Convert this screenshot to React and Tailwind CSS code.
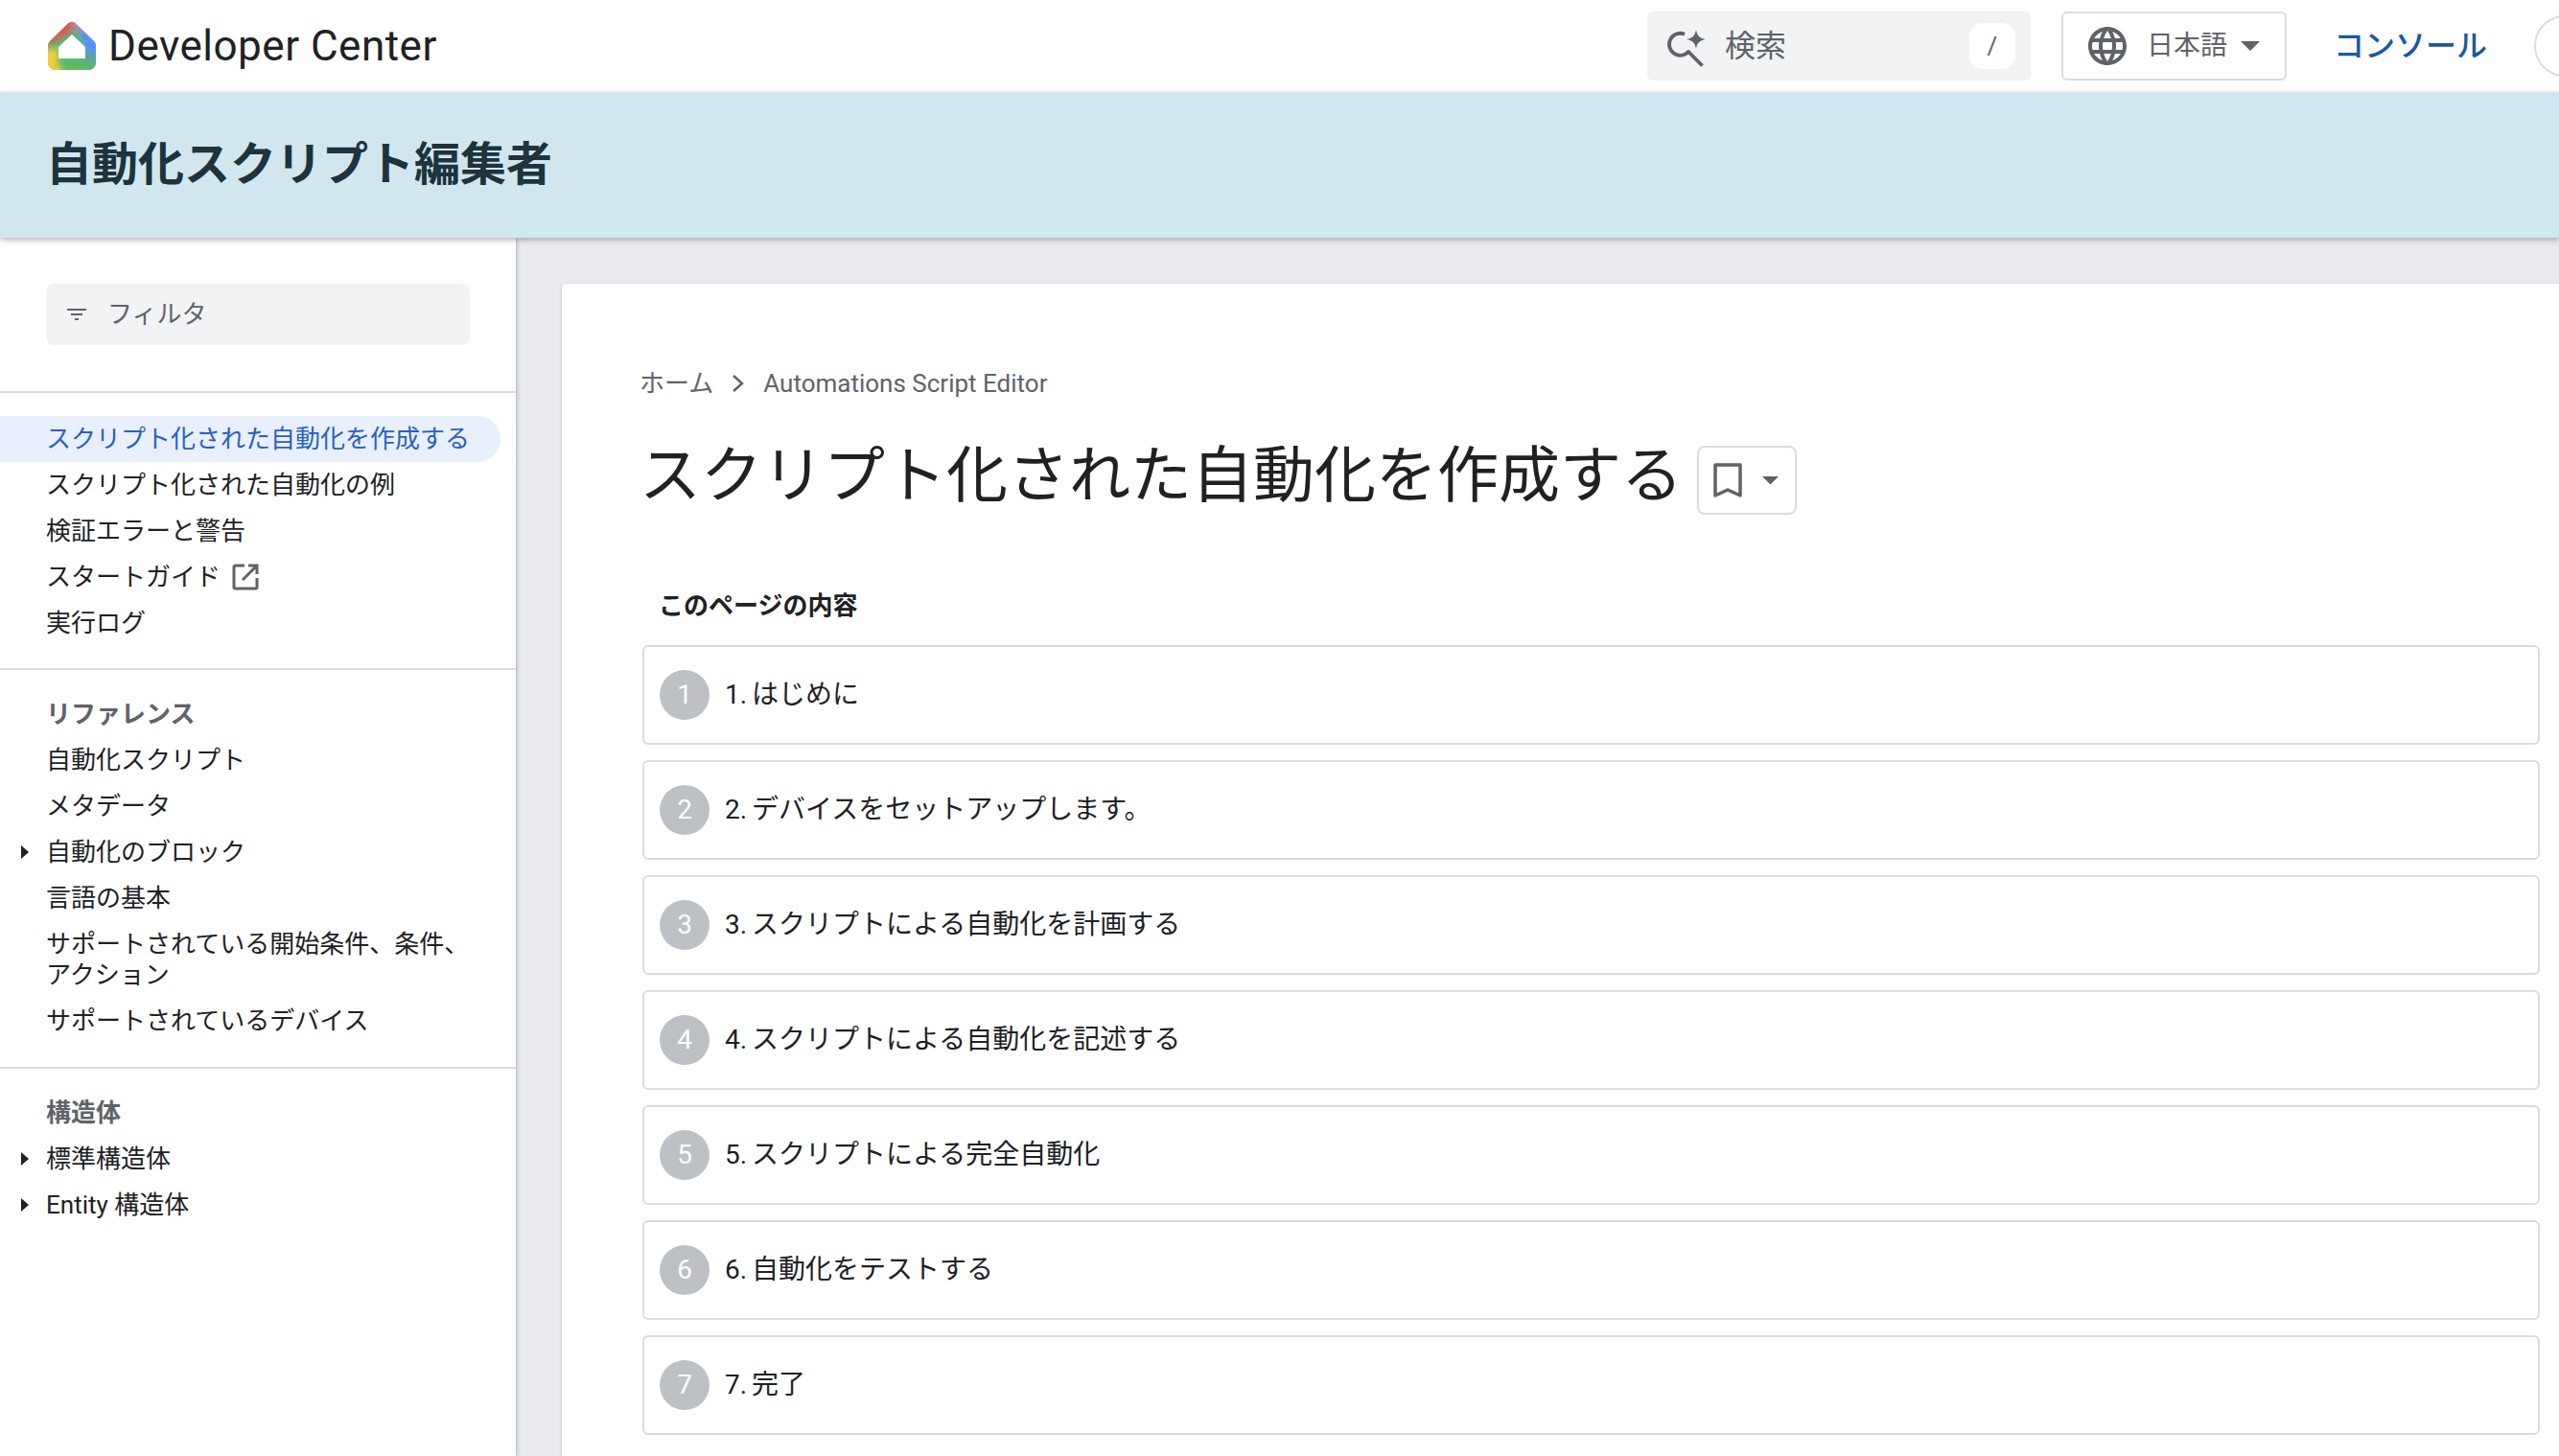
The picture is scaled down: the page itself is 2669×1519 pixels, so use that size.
import React from 'react';

const font = { fontFamily: 'Roboto, "Noto Sans CJK JP", sans-serif' };

const Logo = () => (
  <svg width="54" height="54" viewBox="0 0 54 54" className="shrink-0">
    <defs>
      <clipPath id="house">
        <path d="M27 2c2 0 3.400.8 4.800 2.300L50 22c1.300 1.500 2 3 2 5v17c0 4.500-3.500 8-8 8H10c-4.500 0-8-3.500-8-8V27c0-2 .7-3.500 2-5L22.200 4.300C23.600 2.800 25 2 27 2z" />
      </clipPath>
      <filter id="soft" x="-30%" y="-30%" width="160%" height="160%">
        <feGaussianBlur stdDeviation="3" />
      </filter>
    </defs>
    <g clipPath="url(#house)">
      <rect width="54" height="54" fill="#5bb974" />
      <g filter="url(#soft)">
        <polygon points="-5,-5 27,-5 27,12 -5,30" fill="#e2574c" />
        <polygon points="27,-5 42,-5 42,16 30,10" fill="#b97fc8" />
        <polygon points="36,10 60,0 60,36 40,34" fill="#5c8ffb" />
        <polygon points="-5,30 14,30 12,46 20,60 -5,60" fill="#f2cf3b" />
        <polygon points="40,34 60,34 60,46 42,44" fill="#57a5a0" />
        <polygon points="14,44 50,44 50,60 22,60" fill="#5fb760" />
      </g>
    </g>
    <path d="M27 15L13 28v12h28V28z" fill="#fff" />
  </svg>
);

const SearchSpark = () => (
  <svg width="44" height="44" viewBox="0 0 44 44" fill="none" className="shrink-0">
    <path d="M19 9.700a11.500 11.500 0 1 0 5 17" stroke="#5f6368" strokeWidth="3.800" />
    <path d="M22.500 27.500l15 15" stroke="#5f6368" strokeWidth="3.800" />
    <path d="M31 5c1 6 3.500 9 10 10-6.500 1-9 4-10 10-1-6-3.500-9-10-10 6.500-1 9-4 10-10z" fill="#5f6368" />
  </svg>
);

const Globe = () => (
  <svg width="48" height="48" viewBox="0 0 24 24" className="shrink-0" fill="#5f6368">
    <path d="M12 2C6.480 2 2 6.480 2 12s4.480 10 10 10 10-4.480 10-10S17.520 2 12 2zm6.930 6h-2.950a15.650 15.650 0 0 0-1.380-3.560A8.030 8.030 0 0 1 18.930 8zM12 4.040c.83 1.200 1.480 2.530 1.910 3.960h-3.820c.43-1.430 1.080-2.760 1.910-3.960zM4.260 14C4.100 13.360 4 12.690 4 12s.1-1.360.26-2h3.380c-.08.660-.14 1.320-.14 2s.06 1.340.14 2H4.260zm.82 2h2.950c.32 1.250.78 2.450 1.380 3.560A7.987 7.987 0 0 1 5.080 16zm2.950-8H5.080a7.987 7.987 0 0 1 4.330-3.560A15.650 15.650 0 0 0 8.030 8zM12 19.960c-.83-1.200-1.480-2.530-1.910-3.960h3.820c-.43 1.430-1.080 2.760-1.910 3.960zM14.340 14H9.660c-.09-.660-.16-1.320-.16-2s.07-1.350.16-2h4.680c.09.650.16 1.320.16 2s-.07 1.340-.16 2zm.25 5.560c.6-1.110 1.060-2.310 1.380-3.560h2.950a8.030 8.030 0 0 1-4.330 3.560zM16.360 14c.08-.660.14-1.320.14-2s-.06-1.340-.14-2h3.380c.16.640.26 1.310.26 2s-.1 1.360-.26 2h-3.380z" />
  </svg>
);

const Caret = ({ size = 20 }) => (
  <svg width={size} height={size / 2} viewBox="0 0 20 10" className="shrink-0">
    <path d="M0 0h20L10 10z" fill="#5f6368" />
  </svg>
);

const FilterIcon = () => (
  <svg width="24" height="24" viewBox="0 0 24 24" className="shrink-0" fill="#5f6368">
    <path d="M2 6h20v2H2zM6 11h12v2H6zM10 16h4v2h-4z" />
  </svg>
);

const ExternalIcon = () => (
  <svg width="30" height="30" viewBox="0 0 30 30" fill="none" className="shrink-0">
    <path d="M14 3H4.500A1.500 1.500 0 0 0 3 4.500v21A1.500 1.500 0 0 0 4.500 27h21a1.500 1.500 0 0 0 1.500-1.500V16" stroke="#5f6368" strokeWidth="3" />
    <path d="M18 3h9v9M27 3L12 18" stroke="#5f6368" strokeWidth="3" />
  </svg>
);

const Arrow = () => (
  <svg width="8" height="14" viewBox="0 0 8 14" className="absolute left-[22px] top-1/2 -translate-y-1/2">
    <path d="M0 0l8 7-8 7z" fill="#202124" />
  </svg>
);

const NavItem = ({ children, active, arrow, bold }) => (
  <div
    className={`relative flex min-h-[48px] items-center py-[8px] pl-[48px] text-[26px] leading-[32px] ${
      active ? 'mr-[16px] rounded-r-[24px] bg-[#e8f0fe] pr-[20px] text-[#2a5fc4]' : bold ? 'pr-[44px] font-bold text-[#5f6368]' : 'pr-[44px] text-[#202124]'
    }`}
  >
    {arrow && <Arrow />}
    {children}
  </div>
);

const Divider = () => <div className="h-[2px] bg-[#dadce0]" />;

const steps = [
  '1. はじめに',
  '2. デバイスをセットアップします。',
  '3. スクリプトによる自動化を計画する',
  '4. スクリプトによる自動化を記述する',
  '5. スクリプトによる完全自動化',
  '6. 自動化をテストする',
  '7. 完了',
];

const App = () => (
  <div className="flex h-[1519px] flex-col overflow-hidden bg-[#e8eaed]" style={font}>
    <header className="flex h-[96px] shrink-0 items-center bg-white pl-[48px]">
      <Logo />
      <span className="ml-[11px] text-[44px] leading-none tracking-[0.5px] text-[#202124]">Developer Center</span>
      <div className="ml-auto flex h-[72px] w-[400px] items-center rounded-[6px] bg-[#f1f3f4] pl-[20px] pr-[16px]">
        <SearchSpark />
        <span className="ml-[17px] text-[32px] text-[#5f6368]">検索</span>
        <span className="ml-auto flex h-[48px] w-[48px] items-center justify-center rounded-[14px] bg-white text-[26px] text-[#5f6368]">/</span>
      </div>
      <button className="ml-[32px] flex h-[72px] w-[235px] items-center rounded-[6px] border-2 border-[#dadce0] bg-white pl-[22px]">
        <Globe />
        <span className="ml-[17px] text-[28px] text-[#5f6368]">日本語</span>
        <span className="ml-[14px]"><Caret /></span>
      </button>
      <span className="ml-[49px] text-[32px] font-medium text-[#1a5a9e]">コンソール</span>
      <div className="ml-[49px] mr-[-38px] h-[64px] w-[64px] shrink-0 rounded-full border-2 border-[#dadce0]" />
    </header>

    <div className="relative z-10 flex h-[152px] shrink-0 items-center bg-[#d2e6ee] pl-[48px] shadow-[0_2px_6px_rgba(60,64,67,0.4)]">
      <h1 className="text-[48px] font-bold text-[#1d333d]">自動化スクリプト編集者</h1>
    </div>

    <div className="flex min-h-0 flex-1">
      <aside className="w-[538px] shrink-0 bg-white pt-[48px] shadow-[1px_0_4px_rgba(60,64,67,0.35)]">
        <div className="mx-[48px] flex h-[64px] w-[442px] items-center rounded-[8px] bg-[#f1f3f4] pl-[20px] text-[26px] text-[#5f6368]">
          <FilterIcon />
          <span className="ml-[20px]">フィルタ</span>
        </div>
        <div className="mt-[48px]"><Divider /></div>
        <nav className="pb-[23px] pt-[24px]">
          <NavItem active>スクリプト化された自動化を作成する</NavItem>
          <NavItem>スクリプト化された自動化の例</NavItem>
          <NavItem>検証エラーと警告</NavItem>
          <NavItem>
            <span>スタートガイド</span>
            <span className="ml-[11px]"><ExternalIcon /></span>
          </NavItem>
          <NavItem>実行ログ</NavItem>
        </nav>
        <Divider />
        <nav className="pb-[24px] pt-[22px]">
          <NavItem bold>リファレンス</NavItem>
          <NavItem>自動化スクリプト</NavItem>
          <NavItem>メタデータ</NavItem>
          <NavItem arrow>自動化のブロック</NavItem>
          <NavItem>言語の基本</NavItem>
          <NavItem>サポートされている開始条件、条件、アクション</NavItem>
          <NavItem>サポートされているデバイス</NavItem>
        </nav>
        <Divider />
        <nav className="pb-[24px] pt-[22px]">
          <NavItem bold>構造体</NavItem>
          <NavItem arrow>標準構造体</NavItem>
          <NavItem arrow>Entity 構造体</NavItem>
        </nav>
      </aside>

      <main className="min-w-0 flex-1 pl-[48px] pt-[48px]">
        <div className="h-[1400px] rounded-tl-[4px] bg-white pl-[81px] pr-[20px] pt-[84px] shadow-[0_1px_3px_rgba(60,64,67,0.3)]">
          <div className="flex h-[40px] items-center text-[26px] text-[#5f6368]">
            <span>ホーム</span>
            <svg width="14" height="20" viewBox="0 0 14 20" fill="none" className="mx-[19px]">
              <path d="M2 2l9 8-9 8" stroke="#5f6368" strokeWidth="2.500" />
            </svg>
            <span>Automations Script Editor</span>
          </div>
          <div className="mt-[33px] flex items-center">
            <h2 className="text-[64px] font-normal leading-[88px] text-[#202124]">スクリプト化された自動化を作成する</h2>
            <button className="ml-[15px] mt-[8px] flex h-[72px] w-[104px] items-center rounded-[8px] border-2 border-[#dadce0] bg-white pl-[15px]">
              <svg width="30" height="36" viewBox="0 0 30 36" fill="none">
                <path d="M2 34V2h26v32l-13-6z" stroke="#5f6368" strokeWidth="3.500" strokeLinejoin="round" />
              </svg>
              <span className="ml-[21px]"><Caret size={17} /></span>
            </button>
          </div>
          <div className="ml-[20px] mt-[71px] text-[26px] font-bold leading-[40px] text-[#202124]">このページの内容</div>
          <div className="ml-[3px] mt-[21px] flex flex-col gap-[16px]">
            {steps.map((step, i) => (
              <div key={step} className="flex h-[104px] items-center rounded-[6px] border-2 border-[#dadce0] bg-white pl-[16px]">
                <span className="flex h-[52px] w-[52px] shrink-0 items-center justify-center rounded-full bg-[#bdc1c6] text-[28px] text-white">{i + 1}</span>
                <span className="ml-[16px] text-[28px] text-[#202124] [word-spacing:-2px]">{step}</span>
              </div>
            ))}
          </div>
        </div>
      </main>
    </div>
  </div>
);

export default App;
